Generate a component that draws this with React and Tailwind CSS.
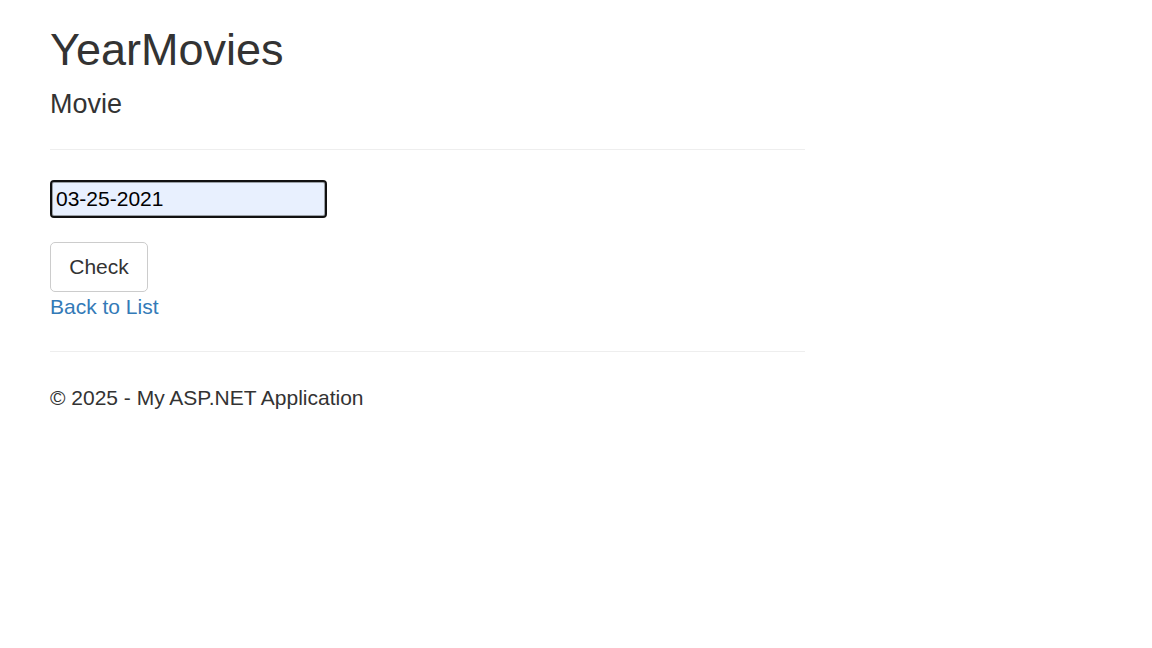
import React, {useState} from 'react'

export default function App(){
  const [date,setDate]=useState('03-25-2021')

  return (
    <div className="min-h-screen bg-white text-[#333] font-['Liberation_Sans',Arial,sans-serif] text-[21px] leading-[30px]">
      <div className="pl-[50px] w-[805px]">
        <h2 className="mt-[25px] text-[45px] leading-[49.5px]">YearMovies</h2>
        <h4 className="mt-[14px] text-[27px] leading-[30px]">Movie</h4>
        <hr className="mt-[30.5px] border-0 border-t border-[#eee]" />

        <form onSubmit={e=>e.preventDefault()}>
          <input
            value={date}
            onChange={e=>setDate(e.target.value)}
            className="mt-[30px] block w-[277px] h-[38px] px-[4px] border-2 border-[#111] rounded-[4px] bg-[#e8f0fe] text-black text-[21px] outline-none shadow-[inset_0_0_0_1px_#9aa0a6]"
          />
          <button className="mt-[24px] flex items-center justify-center w-[98px] h-[50px] border border-[#ccc] rounded-[5px] bg-white text-[#333]">
            Check
          </button>
        </form>
        <a href="#" className="block text-[#337ab7] hover:underline">Back to List</a>

        <hr className="mt-[29px] border-0 border-t border-[#eee]" />
        <footer className="mt-[31px]">
          <p>© 2025 - My ASP.NET Application</p>
        </footer>
      </div>
    </div>
  )
}
